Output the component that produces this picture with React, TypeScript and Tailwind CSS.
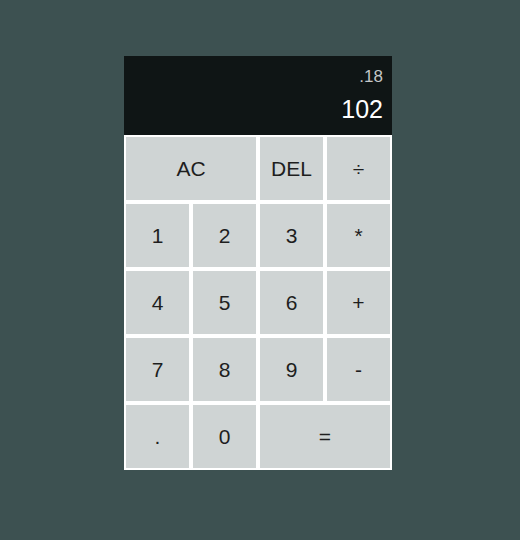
import React from 'react';

type Key = { label: string; wide?: boolean };

const keys: Key[] = [
  { label: 'AC', wide: true },
  { label: 'DEL' },
  { label: '÷' },
  { label: '1' },
  { label: '2' },
  { label: '3' },
  { label: '*' },
  { label: '4' },
  { label: '5' },
  { label: '6' },
  { label: '+' },
  { label: '7' },
  { label: '8' },
  { label: '9' },
  { label: '-' },
  { label: '.' },
  { label: '0' },
  { label: '=', wide: true },
];

const App: React.FC = () => {
  return (
    <div
      className="min-h-screen bg-[#3d5151] pt-[56px] pl-[124px]"
      style={{ fontFamily: '"Liberation Sans", Arial, sans-serif' }}
    >
      <div className="w-[268px]">
        {/* display */}
        <div className="h-[79px] bg-[#0f1515] flex flex-col items-end pt-[12px] pr-[9px] gap-[12px]">
          <div className="text-[17px] leading-[17px] text-[#c4c7c7]">.18</div>
          <div className="text-[25px] leading-[25px] text-white">102</div>
        </div>

        {/* keypad */}
        <div className="grid grid-cols-[repeat(4,67px)] auto-rows-[67px]">
          {keys.map((k) => (
            <button
              key={k.label}
              className={`${k.wide ? 'col-span-2' : ''} border-2 border-white bg-[#cfd4d4] text-[21px] text-[#1e1e1e] flex items-center justify-center`}
            >
              {k.label}
            </button>
          ))}
        </div>
      </div>
    </div>
  );
};

export default App;
